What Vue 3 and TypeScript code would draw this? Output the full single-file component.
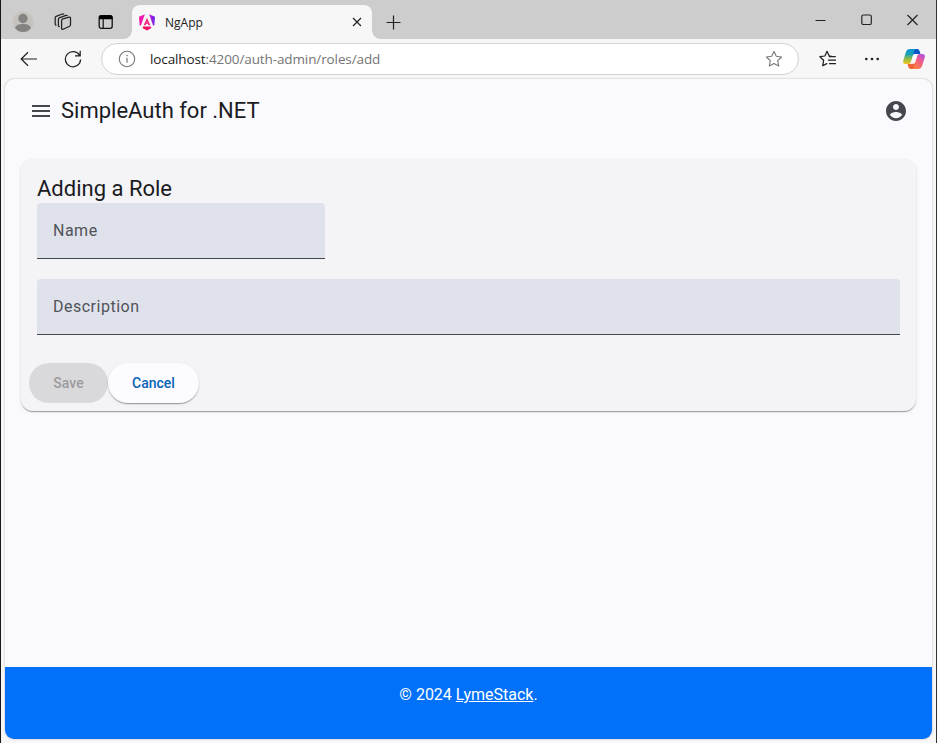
<script setup lang="ts">
import { ref } from 'vue'

const tabTitle = ref('NgApp')
const host = ref('localhost')
const path = ref(':4200/auth-admin/roles/add')
const fields = [
  { id: 'name', label: 'Name', wide: false },
  { id: 'description', label: 'Description', wide: true },
]
</script>

<template>
  <div class="window">
    <header class="tabstrip">
      <svg class="profile" width="22" height="22" viewBox="0 0 22 22">
        <circle cx="11" cy="11" r="10.5" fill="#c6c3bf" />
        <circle cx="11" cy="7.5" r="4.7" fill="#858381" />
        <path d="M3.2 17.3c0-2.8 3.3-4.3 7.8-4.3s7.800 1.500 7.800 4.300c-1.600 2.300-4.400 3.800-7.800 3.800s-6.200-1.500-7.800-3.800z" fill="#858381" />
      </svg>
      <svg class="spaces" width="18" height="18" viewBox="0 0 18 18" fill="none" stroke="#222" stroke-width="1.250" stroke-linejoin="round" stroke-linecap="round">
        <path d="M8.200 6.200l7-2q1.300-.3 1.300 1v6.600q0 1-.9 1.400l-6.500 3q-1.500.5-1.500-1V7.300q0-.8.6-1.100z" />
        <path d="M5.200 13.700q-.8-.1-.8-1.200V6.300q0-1 .9-1.400l6.600-2.500q1-.3 1.300.2" />
        <path d="M2 12.200q-.8-.2-.8-1.200V4.800q0-1 .9-1.400L8.300 1q1-.3 1.400.1" />
      </svg>
      <svg class="tabmenu" width="16" height="16" viewBox="0 0 16 16">
        <rect x="1.200" y="1.700" width="13" height="12.600" rx="2" fill="none" stroke="#111" stroke-width="1.300" />
        <path d="M1 5.200V3.500Q1 1.200 3.300 1.200h9q2.200 0 2.200 2.300v1.700z" fill="#000" />
        <path d="M5.200 5v9" stroke="#111" stroke-width="1.200" />
      </svg>
      <div class="tab">
        <svg class="angular" width="16" height="17" viewBox="0 0 16 17">
          <defs>
            <linearGradient id="ng" gradientUnits="userSpaceOnUse" x1="0" y1="8" x2="16" y2="6">
              <stop offset="0" stop-color="#f4149c" />
              <stop offset=".5" stop-color="#ed22ca" />
              <stop offset="1" stop-color="#6823ee" />
            </linearGradient>
            <linearGradient id="ngb" x1="0" y1="0" x2="1" y2="0">
              <stop offset="0" stop-color="#f40a3c" />
              <stop offset="1" stop-color="#f5108c" />
            </linearGradient>
          </defs>
          <path d="M0 2.700L5.900.3 1.900 11.600.7 11.400zM10.100.3L16 2.700l-.7 8.700-1.200.2z" fill="url(#ng)" />
          <path d="M8 4l3.300 7.300H9.500l-.7-1.500H7.200l-.7 1.500H4.700zM8 7.200l-.6 1.400h1.200z" fill="#f2187c" fill-rule="evenodd" />
          <path d="M4.200 12.500h7.600l.7 1.600L8 16.500l-4.500-2.400z" fill="url(#ngb)" />
        </svg>
        <span class="tab-title">{{ tabTitle }}</span>
        <svg width="10" height="10" viewBox="0 0 10 10" stroke="#222" stroke-width="1.200">
          <path d="M1 1l8 8M9 1L1 9" />
        </svg>
      </div>
      <svg class="newtab" width="15" height="15" viewBox="0 0 15 15" stroke="#222" stroke-width="1.200">
        <path d="M7.500 .5v14M.5 7.500h14" />
      </svg>
      <div class="controls">
        <svg width="11" height="12" viewBox="0 0 11 12" stroke="#222"><path d="M.5 6.500h10" /></svg>
        <svg width="11" height="12" viewBox="0 0 11 12" fill="none" stroke="#222" stroke-width="1.150"><rect x=".8" y="1" width="9.500" height="9.500" rx="1.600" /></svg>
        <svg width="11" height="12" viewBox="0 0 11 12" stroke="#222" stroke-width="1.150"><path d="M.5 1l10 10M10.500 1L.5 11" /></svg>
      </div>
    </header>

    <nav class="toolbar">
      <svg class="back" width="18" height="16" viewBox="0 0 18 16" fill="none" stroke="#222" stroke-width="1.200">
        <path d="M8 1.300L1.200 8 8 14.700M1.200 8H17" />
      </svg>
      <svg class="reload" width="18" height="18" viewBox="0 0 18 18" fill="none" stroke="#222" stroke-width="1.250">
        <path d="M15.700 5.600A7.600 7.600 0 1 0 16.600 9.500M16.200.8v5h-5.200" />
      </svg>
      <div class="address">
        <svg class="info" width="18" height="18" viewBox="0 0 18 18" fill="none" stroke="#777">
          <circle cx="9" cy="9" r="7.700" stroke-width="1.100" />
          <path d="M9 7.800v5" stroke-width="1.200" />
          <circle cx="9" cy="5.600" r=".8" fill="#777" stroke="none" />
        </svg>
        <span class="url"><span class="host">{{ host }}</span>{{ path }}</span>
        <svg class="star" width="18" height="18" viewBox="0 0 18 18" fill="none" stroke="#777" stroke-width="1.100" stroke-linejoin="round">
          <path d="M9 1.400l2.300 4.900 5.300.7-3.900 3.700 1 5.300L9 13.400 4.300 16l1-5.300L1.400 7l5.300-.7z" />
        </svg>
      </div>
      <svg class="favs" width="18" height="18" viewBox="0 0 18 18" fill="none" stroke="#222" stroke-width="1.250" stroke-linejoin="round" stroke-linecap="round">
        <path d="M12 6.200l-1.800-.2L8 1.300 5.900 6l-5 .7 3.700 3.600-.9 5.500 4.100-2.200M10.300 6.700h6M9.500 10.200h7M10.500 13.700h6" />
      </svg>
      <svg class="more" width="16" height="4" viewBox="0 0 16 4" fill="#222">
        <circle cx="2.300" cy="2" r="1.350" /><circle cx="8" cy="2" r="1.350" /><circle cx="13.700" cy="2" r="1.350" />
      </svg>
      <svg class="copilot" width="22" height="20" viewBox="0 0 22 20">
        <defs>
          <linearGradient id="cl" x1="0" y1="0" x2="0" y2="1">
            <stop offset="0" stop-color="#0a91d8" />
            <stop offset=".35" stop-color="#1b9fb5" />
            <stop offset=".65" stop-color="#8fbd48" />
            <stop offset="1" stop-color="#f4c51c" />
          </linearGradient>
          <linearGradient id="cr" x1="1" y1="0" x2=".3" y2="1">
            <stop offset="0" stop-color="#a34ff0" />
            <stop offset=".45" stop-color="#ee5b91" />
            <stop offset="1" stop-color="#ff813f" />
          </linearGradient>
        </defs>
        <path d="M10 0h4.200q1.800 0 2.400 2l1 3.400h-5L10 7z" fill="#0b55c6" />
        <path d="M12 20H7.800q-1.800 0-2.400-2l-1-3.400h4.800L12 13z" fill="#f06435" />
        <path d="M6.500 0H13q-1.400.5-2 2.500L8 13q-.6 2-2.600 2H2.800Q-.6 15 .3 11.400L3 2.700Q3.800 0 6.500 0z" fill="url(#cl)" />
        <path d="M15.500 20H9q1.400-.5 2-2.500L14 7q.6-1.900 2.600-1.900h2.600q3.400 0 2.500 3.500L19 17.300Q18.200 20 15.500 20z" fill="url(#cr)" />
        <path d="M10.300 5.800q.3-.7 1.100-.7h4.400q-1.300.5-1.800 1.900l-2.200 7q-.3.700-1.100.7H6.200q1.400-.4 1.800-1.700z" fill="#faf8fa" />
      </svg>
    </nav>

    <div class="page">
      <header class="appbar">
        <svg width="18" height="12" viewBox="0 0 18 12" fill="#44474e"><path d="M0 0h18v2H0zM0 5h18v2H0zM0 10h18v2H0z" /></svg>
        <h1>SimpleAuth for .NET</h1>
        <svg class="account" width="24" height="24" viewBox="0 0 24 24" fill="#44474e">
          <path d="M12 2C6.480 2 2 6.480 2 12s4.480 10 10 10 10-4.480 10-10S17.520 2 12 2zm0 3c1.660 0 3 1.340 3 3s-1.340 3-3 3-3-1.340-3-3 1.340-3 3-3zm0 14.200c-2.500 0-4.710-1.280-6-3.220.03-1.990 4-3.080 6-3.080 1.990 0 5.970 1.090 6 3.080-1.290 1.940-3.500 3.220-6 3.220z" />
        </svg>
      </header>

      <main>
        <form class="card" @submit.prevent>
          <h2>Adding a Role</h2>
          <label v-for="f in fields" :key="f.id" class="field" :class="{ wide: f.wide }">{{ f.label }}</label>
          <div class="actions">
            <button class="save" type="submit" disabled>Save</button>
            <button class="cancel" type="button">Cancel</button>
          </div>
        </form>
      </main>

      <footer>© 2024 <a href="#">LymeStack</a>.</footer>
    </div>
  </div>
</template>

<style>
body {
  margin: 0;
}
</style>

<style scoped>
* {
  box-sizing: border-box;
}
svg {
  display: block;
  flex: none;
}
.window {
  width: 937px;
  height: 743px;
  display: flex;
  flex-direction: column;
  overflow: hidden;
  background: #f7f7f7;
  border-left: 1px solid #17171a;
  border-right: 1px solid #303238;
  font-family: Roboto, sans-serif;
}
.tabstrip {
  height: 39px;
  flex: none;
  display: flex;
  align-items: center;
  padding: 5px 18px 0 11px;
  background: #cdcdcd;
}
.spaces {
  margin-left: 20px;
}
.tabmenu {
  margin-left: 26px;
}
.tab {
  position: relative;
  width: 240px;
  height: 34px;
  margin-left: 18px;
  padding: 0 10px 0 7px;
  display: flex;
  align-items: center;
  background: #f7f7f7;
  border-radius: 8px 8px 0 0;
}
.tab::before,
.tab::after {
  content: '';
  position: absolute;
  bottom: 0;
  width: 8px;
  height: 8px;
}
.tab::before {
  left: -8px;
  background: radial-gradient(circle at 0 0, transparent 7.500px, #f7f7f7 8px);
}
.tab::after {
  right: -8px;
  background: radial-gradient(circle at 100% 0, transparent 7.500px, #f7f7f7 8px);
}
.tab-title {
  flex: 1;
  margin-left: 10px;
  font: 12px 'Open Sans', sans-serif;
  color: #222;
}
.newtab {
  margin-left: 14px;
}
.controls {
  display: flex;
  gap: 35px;
  margin-left: auto;
  padding-bottom: 5px;
}
.toolbar {
  height: 40px;
  flex: none;
  display: flex;
  align-items: center;
  padding: 0 11px 0 19px;
}
.reload {
  margin-left: 26px;
}
.address {
  width: 699px;
  height: 32px;
  margin-left: 19px;
  padding: 0 15px 0 16px;
  display: flex;
  align-items: center;
  background: #fff;
  border: 1px solid #d2d2d2;
  border-radius: 16px;
}
.url {
  flex: 1;
  margin-left: 14px;
  font: 13.500px 'Open Sans', sans-serif;
  letter-spacing: -0.110px;
  color: #757575;
  white-space: nowrap;
}
.host {
  color: #1b1b1b;
}
.favs {
  margin-left: 20px;
}
.more {
  margin-left: 27px;
}
.copilot {
  margin-left: 23px;
}
.page {
  height: 660px;
  margin: 0 4px;
  display: flex;
  flex-direction: column;
  overflow: hidden;
  background: #faf9fe;
  border-radius: 9px;
  box-shadow: 0 0 2px #aaa;
}
.appbar {
  height: 64px;
  display: flex;
  align-items: center;
  padding: 0 24px 0 27px;
}
h1 {
  margin: 0 0 0 11px;
  font-size: 22px;
  line-height: 28px;
  font-weight: 400;
  color: #1a1b1f;
}
.account {
  margin-left: auto;
}
main {
  flex: 1;
  padding: 16px;
}
.card {
  height: 252px;
  padding: 16px;
  background: #f4f3f6;
  border-radius: 12px;
  box-shadow: 0 2px 1px -1px rgba(0, 0, 0, 0.2), 0 1px 1px rgba(0, 0, 0, 0.14), 0 1px 3px rgba(0, 0, 0, 0.12);
}
h2 {
  margin: 0;
  font-size: 22px;
  line-height: 28px;
  font-weight: 400;
  color: #1a1b1f;
}
.field {
  display: flex;
  align-items: center;
  width: 288px;
  height: 56px;
  margin-bottom: 20px;
  padding: 0 16px;
  background: #dfe2eb;
  border-bottom: 1px solid #44474e;
  border-radius: 4px 4px 0 0;
  font-size: 16px;
  letter-spacing: 0.500px;
  color: #505359;
}
.field.wide {
  width: auto;
}
.actions {
  display: flex;
  margin: 28px 0 0 -8px;
}
button {
  height: 40px;
  padding: 0 24px;
  border: 0;
  border-radius: 20px;
  font: 500 14px/20px Roboto, sans-serif;
}
.save {
  width: 79px;
  background: #d9d9dc;
  color: #9b9b9e;
}
.cancel {
  background: #fcfbff;
  color: #0764b6;
  box-shadow: 0 2px 1px -1px rgba(0, 0, 0, 0.2), 0 1px 1px rgba(0, 0, 0, 0.14), 0 1px 3px rgba(0, 0, 0, 0.12);
}
footer {
  height: 72px;
  padding-top: 16px;
  background: #0071f8;
  color: #fff;
  font-size: 16px;
  line-height: 23px;
  text-align: center;
}
footer a {
  color: inherit;
}
</style>
